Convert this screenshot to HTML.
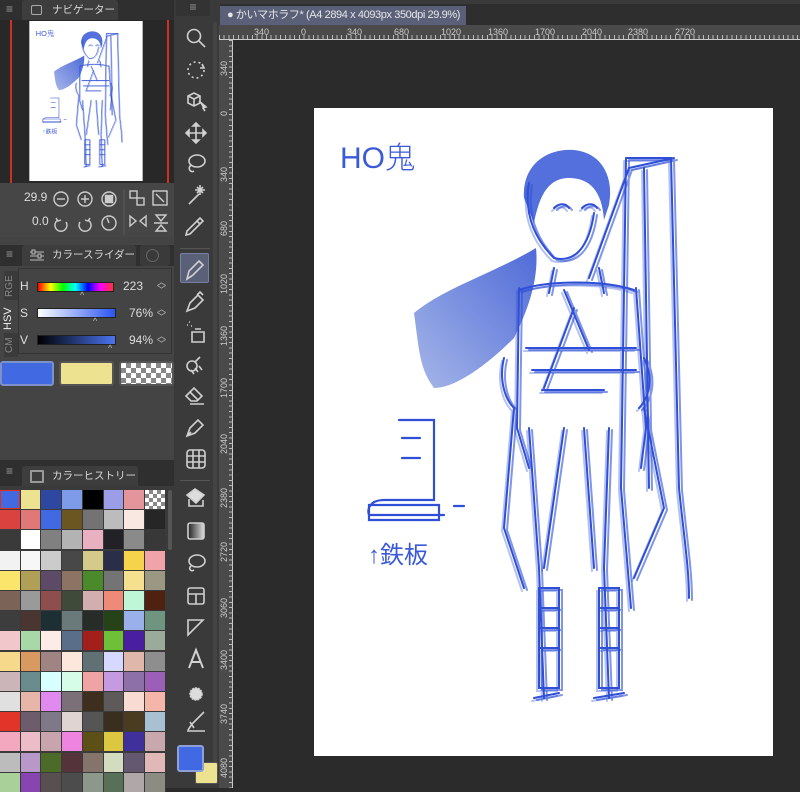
<!DOCTYPE html>
<html><head><meta charset="utf-8"><style>
*{margin:0;padding:0;box-sizing:border-box}
body{width:800px;height:788px;overflow:hidden;background:#2b2b2b;position:relative;font-family:"Liberation Sans","Noto Sans CJK JP",sans-serif;color:#ddd}
.a{position:absolute}
.hd{background:#2f2f2f}
.tab{background:#3d3d3d;color:#d8d8d8;font-size:10.5px;line-height:20px;border-radius:3px 3px 0 0;white-space:nowrap;overflow:visible}
.menu{color:#999;font-size:12px}
.grid div{position:absolute;width:20px;height:19px;outline:1px solid #3a3a3a}
.rt span{position:absolute;top:2px;font-size:9px;color:#ccc}
.rv span{position:absolute;left:0;font-size:9px;color:#ccc;transform:rotate(-90deg);transform-origin:left top;width:30px}
</style></head><body>
<div class="a" style="left:0;top:0;width:174px;height:788px;background:#444"></div>
<div class="a hd" style="left:0;top:0;width:174px;height:20px"></div>
<div class="a menu" style="left:6px;top:2px">≡</div>
<div class="a tab" style="left:22px;top:0;width:96px;height:20px;padding-left:30px">ナビゲーター</div>
<div class="a" style="left:31px;top:5px;width:11px;height:10px;border:1px solid #aaa;border-radius:2px"></div>
<div class="a" style="left:0;top:20px;width:174px;height:163px;background:#282828"></div>
<div class="a" style="left:10px;top:20px;width:2px;height:163px;background:#d03020"></div>
<div class="a" style="left:167px;top:20px;width:2px;height:163px;background:#d03020"></div>
<svg class="a" style="left:29px;top:21px" width="114" height="160" viewBox="0 0 459 648"><rect width="459" height="648" fill="#fff"/><use href="#drw"/></svg>
<div class="a" style="left:0;top:183px;width:174px;height:54px;background:#464646"></div>
<div class="a" style="left:24px;top:190px;font-size:12px;color:#ddd">29.9</div>
<div class="a" style="left:32px;top:214px;font-size:12px;color:#ddd">0.0</div>
<svg class="a" style="left:50px;top:185px" width="124" height="50" fill="none" stroke="#ccc" stroke-width="1.4">
<circle cx="11" cy="14" r="7"/><path d="M7 14h8"/>
<circle cx="35" cy="14" r="7"/><path d="M31 14h8M35 10v8"/>
<circle cx="59" cy="14" r="7"/><rect x="55.5" y="10.5" width="7" height="7" fill="#ccc"/>
<path d="M74 4v46" stroke="#555"/>
<rect x="80" y="6" width="7" height="7"/><rect x="87" y="13" width="7" height="7"/>
<rect x="103" y="6" width="14" height="14"/><path d="M106 9l8 8"/>
<path d="M16 37a6 6 0 1 1-8-2M6 33l2 3 3-1"/>
<path d="M30 37a6 6 0 1 0 8-2M40 33l-2 3-3-1"/>
<circle cx="59" cy="38" r="7"/><path d="M59 38l-2-5"/>
<path d="M80 31l6 5-6 5zM96 31l-6 5 6 5z"/>
<path d="M104 38h14M106 30h10l-5 6zM106 46h10l-5-6z"/>
</svg>
<div class="a hd" style="left:0;top:245px;width:174px;height:21px"></div>
<div class="a menu" style="left:6px;top:247px">≡</div>
<div class="a tab" style="left:22px;top:245px;width:114px;height:21px;padding-left:30px">カラースライダー</div>
<div class="a" style="left:140px;top:245px;width:30px;height:21px;background:#3a3a3a;border-radius:3px"></div>
<div class="a" style="left:146px;top:249px;width:13px;height:13px;border:1.5px solid #666;border-radius:50%"></div>
<svg class="a" style="left:29px;top:249px" width="16" height="14" stroke="#bbb" fill="none"><path d="M1 3h14M1 7h14M1 11h14"/><rect x="3" y="1" width="3" height="4" fill="#444"/><rect x="9" y="5" width="3" height="4" fill="#444"/></svg>
<div class="a" style="left:18px;top:268px;width:154px;height:86px;border:1px solid #333;background:#444"></div>
<div class="a" style="left:4px;top:271px;width:14px;height:30px;background:#3a3a3a;color:#888;font-size:10px;writing-mode:vertical-rl;transform:rotate(180deg);text-align:center">RGE</div>
<div class="a" style="left:2px;top:300px;width:16px;height:38px;background:#444;color:#eee;font-size:11px;writing-mode:vertical-rl;transform:rotate(180deg);text-align:center">HSV</div>
<div class="a" style="left:4px;top:333px;width:14px;height:24px;background:#3a3a3a;color:#888;font-size:10px;writing-mode:vertical-rl;transform:rotate(180deg);text-align:center">CM</div>
<div class="a" style="left:20px;top:279px;font-size:12px">H</div>
<div class="a" style="left:20px;top:306px;font-size:12px">S</div>
<div class="a" style="left:20px;top:333px;font-size:12px">V</div>
<div class="a" style="left:37px;top:282px;width:77px;height:10px;background:linear-gradient(90deg,#f00,#ff0,#0f0,#0ff,#00f,#f0f,#f33);border:1px solid #222"></div>
<div class="a" style="left:37px;top:308px;width:79px;height:10px;background:linear-gradient(90deg,#fff,#2b55f0);border:1px solid #222"></div>
<div class="a" style="left:37px;top:335px;width:79px;height:10px;background:linear-gradient(90deg,#000,#4a74f0);border:1px solid #222"></div>
<div class="a" style="left:80px;top:290px;font-size:9px;color:#bbb">^</div>
<div class="a" style="left:93px;top:316px;font-size:9px;color:#bbb">^</div>
<div class="a" style="left:108px;top:343px;font-size:9px;color:#bbb">^</div>
<div class="a" style="left:123px;top:279px;font-size:12px">223</div>
<div class="a" style="left:129px;top:306px;font-size:12px">76%</div>
<div class="a" style="left:129px;top:333px;font-size:12px">94%</div>
<div class="a" style="left:157px;top:278px;font-size:9px;line-height:8px;color:#bbb">︿<br>﹀</div>
<div class="a" style="left:157px;top:305px;font-size:9px;line-height:8px;color:#bbb">︿<br>﹀</div>
<div class="a" style="left:157px;top:332px;font-size:9px;line-height:8px;color:#bbb">︿<br>﹀</div>
<div class="a" style="left:0;top:361px;width:54px;height:25px;background:#4169e1;border:2px solid #7d90c8;border-radius:3px"></div>
<div class="a" style="left:59px;top:361px;width:55px;height:25px;background:#ece28f;border:2px solid #555;border-radius:3px"></div>
<div class="a" style="left:119px;top:361px;width:55px;height:25px;border:2px solid #555;border-radius:3px;background:repeating-conic-gradient(#888 0 25%,#fff 0 50%) 0 0/10px 10px"></div>
<div class="a hd" style="left:0;top:460px;width:174px;height:26px"></div>
<div class="a menu" style="left:6px;top:464px">≡</div>
<div class="a tab" style="left:22px;top:466px;width:116px;height:20px;padding-left:30px">カラーヒストリー</div>
<div class="a" style="left:30px;top:470px;width:14px;height:13px;border:2px solid #999;border-radius:1px"></div>
<div class="a" style="left:0;top:486px;width:174px;height:302px;background:#3a3a3a"></div>
<div class="a" style="left:168px;top:490px;width:4px;height:60px;background:#555;border-radius:2px"></div>
<div class="a grid" id="g" style="left:0;top:490px"></div>
<div class="a" style="left:174px;top:0;width:46px;height:788px;background:#3a3a3a"></div>
<div class="a" style="left:176px;top:0;width:34px;height:16px;background:#333;color:#999;font-size:12px;text-align:center">≡</div>
<div class="a" style="left:213px;top:22px;width:4px;height:740px;background:#444;border-radius:2px"></div>
<div class="a" style="left:180px;top:253px;width:29px;height:30px;background:#5b6079;border:1px solid #7780a0;border-radius:2px"></div>
<div class="a" style="left:180px;top:248px;width:30px;height:1px;background:#555"></div>
<div class="a" style="left:180px;top:480px;width:30px;height:1px;background:#555"></div>
<svg class="a" style="left:178px;top:0" width="36" height="788" fill="none" stroke="#d0d0d0" stroke-width="1.6">
<circle cx="16" cy="36" r="6.5"/><path d="M21 41l6 6"/>
<circle cx="18" cy="70" r="8" stroke-dasharray="2 3"/><path d="M24 64l2 4-4 0"/>
<path d="M10 96l6-3 6 3v7l-6 3-6-3zM10 96l6 3 6-3M16 99v7"/><path d="M21 101l7 6-3 1 2 3" fill="#ddd"/>
<path d="M18 123v20M8 133h20M18 123l-3 3h6zM18 143l-3-3h6zM8 133l3-3v6zM28 133l-3-3v6z" fill="#ddd"/>
<ellipse cx="19" cy="161" rx="8" ry="6"/><path d="M13 165c-4 4 0 8 3 6"/>
<path d="M11 204l10-10M22 185v10M17 190h10M19 187l6 6M25 187l-6 6"/>
<path d="M8 235l4-1 10-10-3-3-10 10zM19 221l3-3 3 3-3 3"/>
<path d="M9 279l2-8 10-10 4 4-10 10zM9 279l5-3"/>
<path d="M9 311l3-8 8-8 5 5-8 8zM19 295l3-3 3 3"/>
<path d="M11 322h1M9 325h1M13 326h1M14 332h12v10h-12zM17 329h6"/>
<circle cx="14" cy="366" r="5"/><path d="M17 362l5-5M13 370l3 4M17 368l3 4M21 366l3 4"/>
<path d="M8 396l8-8 8 8-5 5h-6zM12 392l8 8M12 404h14"/>
<path d="M9 436l3-8 8-8 5 5-8 8zM9 436l4-4"/>
<rect x="9" y="450" width="18" height="18" rx="3"/><path d="M9 456h18M9 462h18M15 450v18M21 450v18"/>
<path d="M9 495l8-6 9 6-8 8z" fill="#ddd"/><path d="M11 499v7h14v-6"/>
<rect x="10" y="523" width="16" height="16" rx="2" fill="url(#gr)"/>
<ellipse cx="19" cy="561" rx="8" ry="6"/><path d="M13 566c-3 3 0 6 3 4"/>
<rect x="10" y="588" width="16" height="16" rx="2"/><path d="M10 594h16M18 594v10"/>
<path d="M10 620h15l-15 15z"/>
<path d="M11 668l7-18 7 18M13 662h10" stroke-width="2"/>
<circle cx="18" cy="694" r="6" fill="#ddd" stroke-dasharray="2 1"/>
<path d="M10 730l4-6 12-12M9 731h18M12 722l4 6"/>
<defs><linearGradient id="gr"><stop offset="0" stop-color="#222"/><stop offset="1" stop-color="#ddd"/></linearGradient>
<linearGradient id="hg" x1="1" y1="0" x2="0" y2="1"><stop offset="0" stop-color="#4a66d8"/><stop offset="1" stop-color="#9fb0e6"/></linearGradient></defs>
</svg>
<div class="a" style="left:195px;top:762px;width:23px;height:22px;background:#ece28f;border:1px solid #555;border-radius:2px"></div>
<div class="a" style="left:177px;top:745px;width:27px;height:27px;background:#4169e1;border:2px solid #8fa0d8;border-radius:3px"></div>
<div class="a" style="left:220px;top:0;width:580px;height:25px;background:#2e2e2e"></div>
<div class="a" style="left:220px;top:0;width:580px;height:4px;background:#3a3a3a"></div>
<div class="a" style="left:220px;top:6px;width:246px;height:19px;background:#5b6079;color:#e6e6e6;font-size:11px;letter-spacing:-0.4px;line-height:19px;padding-left:7px;white-space:nowrap;overflow:hidden">● かいマホラフ* (A4 2894 x 4093px 350dpi 29.9%)</div>
<div class="a rt" style="left:219px;top:25px;width:581px;height:15px;background:#4a4a4a;border-bottom:1px solid #ccc">
<span style="left:35px">340</span><span style="left:82px">0</span><span style="left:128px">340</span><span style="left:175px">680</span><span style="left:222px">1020</span><span style="left:269px">1360</span><span style="left:316px">1700</span><span style="left:363px">2040</span><span style="left:409px">2380</span><span style="left:456px">2720</span>
</div>
<div class="a" style="left:219px;top:35px;width:581px;height:4px;background:repeating-linear-gradient(90deg,#bbb 0 1px,transparent 1px 4.7px)"></div>
<div class="a rv" style="left:219px;top:40px;width:14px;height:748px;background:#4a4a4a;border-right:1px solid #ccc">
<span style="top:36px">340</span><span style="top:76px">0</span><span style="top:142px">340</span><span style="top:196px">680</span><span style="top:254px">1020</span><span style="top:306px">1360</span><span style="top:358px">1700</span><span style="top:414px">2040</span><span style="top:468px">2380</span><span style="top:522px">2720</span><span style="top:578px">3060</span><span style="top:630px">3400</span><span style="top:684px">3740</span><span style="top:738px">4080</span>
</div>
<div class="a" style="left:229px;top:40px;width:4px;height:748px;background:repeating-linear-gradient(180deg,#bbb 0 1px,transparent 1px 5.3px)"></div>
<svg class="a" style="left:314px;top:108px" width="459" height="648" viewBox="0 0 459 648">
<rect width="459" height="648" fill="#fff"/>
<g id="drw" fill="none" stroke="#2f4fd6" stroke-width="2" stroke-linecap="round">
<text x="26" y="60" font-size="30" fill="#3b5ad8" stroke="none" font-family="Liberation Sans,Noto Sans CJK JP,sans-serif" font-weight="300">HO鬼</text>
<path d="M222 140C180 165 130 180 100 205 105 240 105 260 120 280 140 280 170 260 200 230 215 200 225 170 222 140z" fill="url(#hg2)" stroke="none"/>
<path d="M210 90c-2-35 25-50 50-48 30 3 40 30 35 55l-5 15c-2-30-15-42-35-42-22 0-30 20-35 45z" fill="#5470dc" stroke="none"/>
<g id="fig">
<path d="M215 75c-5 30 5 55 25 75 20 5 35-10 40-45M240 100c5-5 12-5 15 0M268 100c5-5 12-5 15 0M240 160l-5 25M285 160l5 25"/>
<path d="M205 180l-2 140 12 40M322 180l10 140-5 40M205 182c30-10 85-10 115 0M212 240h110M218 262h104M228 282h62M250 182l25 60M260 200l-30 80"/>
<path d="M312 50h45l8 330c5 50 10 80 10 110M312 50l-5 330 10 120M360 50l-45 10-40 110M330 60l5 320"/>
<path d="M215 320l10 140 5 130M295 320l-5 140 5 130M250 320l-20 140M270 320l10 140M225 480h20v100h-20zM285 480h20v100h-20zM220 590l25-5M280 590l30-5M225 500h20M225 520h20M225 540h20M285 500h20M285 520h20M285 540h20"/>
<path d="M330 300l20 100-30 70M200 300l-10 120 20 60M190 250c-5 20 0 40 10 50M330 250c10 20 5 40-5 50"/>
</g>
<use href="#fig" transform="translate(3 2)" opacity=".6"/>
<use href="#fig" transform="translate(-2 3)" opacity=".35"/>
<path d="M85 312h35v80H70c-15 0-17 10-15 15h75M88 330h18M88 350h18M55 397h70v15H55zM140 398h10" stroke-width="2.2"/>
<text x="54" y="455" font-size="24" fill="#3b5ad8" stroke="none" font-family="Liberation Sans,Noto Sans CJK JP,sans-serif">↑鉄板</text>
</g>
<defs><linearGradient id="hg2" x1="1" y1="0" x2="0" y2="1"><stop offset="0" stop-color="#4f6bd8"/><stop offset="1" stop-color="#a6b6e8"/></linearGradient></defs>
</svg>
<script>
var c=["#4169e1","#ece28f","#2e47a0","#7d9be8","#000","#9b9de6","#e4959b","ck",
"#d9423f","#e07878","#4169e1","#6b5622","#737373","#bcbcbc","#f9e8e1","#262626",
"#3a3a3a","#fff","#808080","#b3b3b3","#e8b0c0","#222126","#8a8a8a","#383838",
"#f2f2f2","#f7f7f7","#cbcbcb","#484848","#d4cb8a","#2a2e48","#f5d34a","#f0a3a9",
"#fbe66b","#b0a057","#5c4a66","#8d7364","#4b8a2a","#747474","#f5e08f","#9a9883",
"#7b6357","#9a9a9a","#8e4e4e","#3f4a3a","#d3aeaf","#ef8a78","#c0f6d8","#502010",
"#3d3d3d","#4a3530","#1d2f33","#6a7a7a","#282c28","#264219","#99b0ea","#6f9480",
"#f2c7cb","#a8d8a8","#fbece8","#5a6e8a","#a31f19","#6fc039","#4a1ea0","#9aab9c",
"#f7d98c","#d89a60","#a08484","#fde6dc","#607074","#d6d8ff","#e0b8ab","#8e8e8e",
"#ccb5b8","#6a8c8e","#d6fffd","#d6fde8","#f0a3a3","#c69ae0","#8e70a8","#9b5fb8",
"#e0e0e0","#e8b6a8","#e08af0","#7c7078","#3e2e1e","#5e5a5a","#f8dcd4","#f3b6a8",
"#e33429","#6c5c6c","#7e7888","#e0d4d0","#555555","#3a2e1e","#4a3c20","#a8c0d0",
"#f4a8c0","#ecbcc8","#c8a4ac","#ee84e0","#5c5016","#dcc840","#40309c","#c8a8ac",
"#bcbcbc","#b898c8","#4c6a28","#54343a","#84746c","#d4dcc0","#645870","#e0b8b8",
"#a8d098","#8844b0","#585050","#4c4c4c","#8c988c","#587058","#b0a8a8","#8c8c84"];
var g=document.getElementById('g'),h='';
c.forEach(function(x,i){var l=Math.round((i%8)*20.7),t=Math.round(Math.floor(i/8)*20.2);
var bg=x=="ck"?"background:repeating-conic-gradient(#888 0 25%,#fff 0 50%) 0 0/8px 8px":"background:"+x;
if(i==0)bg+=";border:1px solid #e03020";
h+='<div style="left:'+l+'px;top:'+t+'px;'+bg+'"></div>';});
g.innerHTML=h;
</script>
</body></html>
